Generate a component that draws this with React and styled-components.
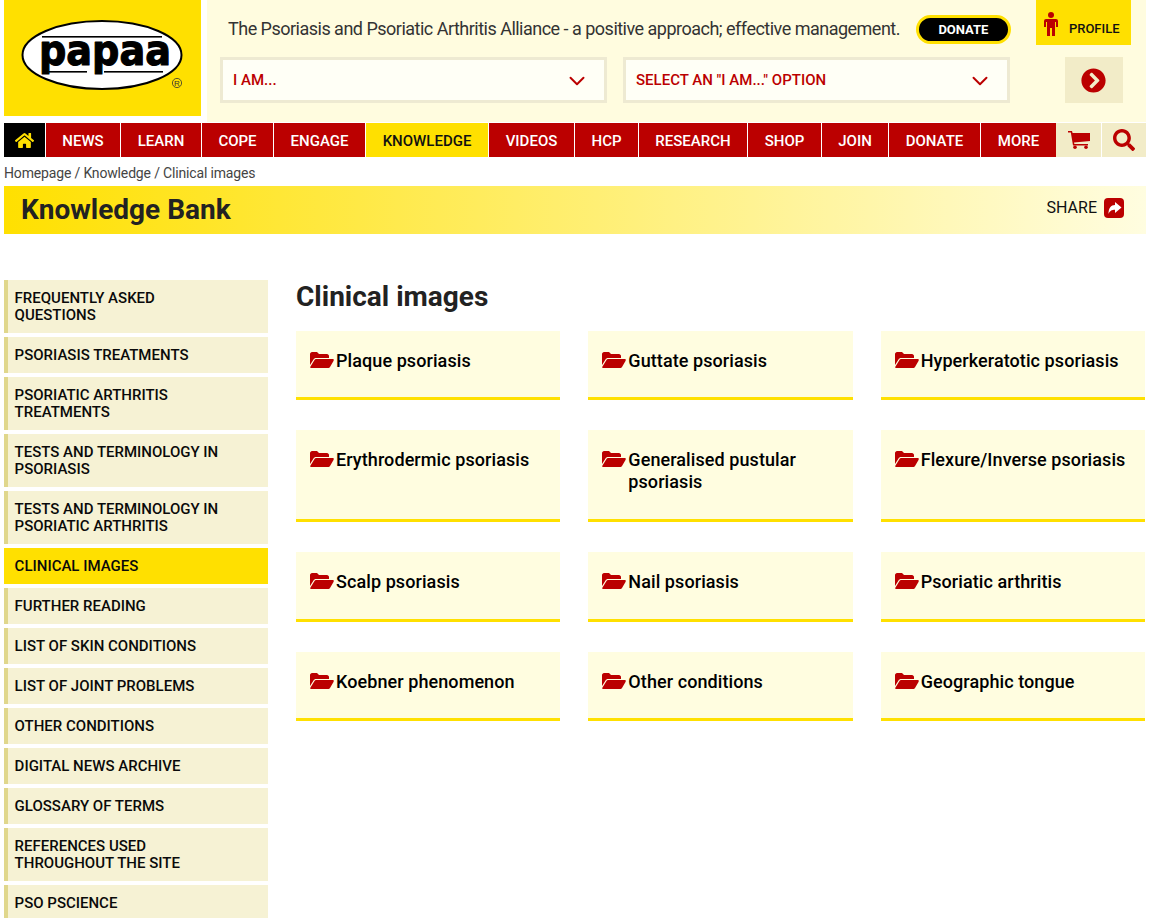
import React from "react";
import styled, { createGlobalStyle } from "styled-components";
import { FaHome, FaSearch, FaChevronCircleRight } from "react-icons/fa";
import { ChevronDown } from "lucide-react";

const RED = "#bb0000";
const YELLOW = "#ffe000";

const Global = createGlobalStyle`
  html, body { margin: 0; padding: 0; background: #fff; }
  body { font-family: Roboto, "Liberation Sans", sans-serif; color: #212529; }
  * { box-sizing: border-box; }
`;

const Page = styled.div`
  padding: 0 7px 0 4px;
  height: 918px;
  overflow: hidden;
`;

const Header = styled.header`
  display: flex;
  height: 123px;
`;

const LogoBox = styled.div`
  width: 197px;
  height: 116px;
  background: ${YELLOW};
  display: flex;
  align-items: center;
  justify-content: center;
`;

const HeaderMain = styled.div`
  flex: 1;
  margin-left: 6px;
  height: 122px;
  background: #fffcdf;
  padding-left: 13px;
  display: flex;
  flex-direction: column;
`;

const TopRow = styled.div`
  display: flex;
  height: 57px;
  align-items: flex-start;
`;

const Tagline = styled.div`
  margin: 17px 0 0 8px;
  font-size: 18px;
  line-height: 24px;
  letter-spacing: -0.51px;
  color: #333;
  white-space: nowrap;
`;

const DonatePill = styled.a`
  margin: 15px 0 0 16px;
  width: 95px;
  height: 29px;
  border-radius: 15px;
  border: 3px solid ${YELLOW};
  background: #000;
  color: #fff;
  font-size: 13px;
  font-weight: 700;
  display: flex;
  align-items: center;
  justify-content: center;
`;

const Profile = styled.a`
  margin-left: 25px;
  width: 95px;
  height: 45px;
  background: ${YELLOW};
  color: #111;
  font-size: 13px;
  font-weight: 500;
  display: flex;
  align-items: center;
  padding-left: 8px;
  gap: 11px;
  svg { margin-top: 3px; }
  span { margin-top: 11px; }
`;

const SelectRow = styled.div`
  display: flex;
  align-items: flex-start;
`;

const Select = styled.div`
  width: 387px;
  height: 46px;
  margin-right: 16px;
  border: 3px solid #eeeAd2;
  background: #fffff6;
  color: ${RED};
  font-size: 15px;
  font-weight: 500;
  display: flex;
  align-items: center;
  justify-content: space-between;
  padding: 0 14px 0 10px;
  svg { margin-top: 2px; }
`;

const GoButton = styled.div`
  width: 58px;
  height: 46px;
  margin-left: 39px;
  padding-right: 2px;
  background: #f2ecc8;
  color: ${RED};
  display: flex;
  align-items: center;
  justify-content: center;
`;

const Nav = styled.nav`
  display: flex;
  height: 34px;
  gap: 1px;
`;

const NavItem = styled.a`
  flex: none;
  background: ${(p) => (p.$active ? YELLOW : RED)};
  color: ${(p) => (p.$active ? "#111" : "#fff")};
  width: ${(p) => p.$w}px;
  padding-top: 1px;
  font-size: 15px;
  font-weight: 500;
  display: flex;
  align-items: center;
  justify-content: center;
`;

const NavIcon = styled.a`
  flex: none;
  width: ${(p) => p.$w}px;
  margin-left: ${(p) => (p.$flush ? "-1px" : "0")};
  background: ${(p) => p.$bg};
  color: ${(p) => p.$color};
  display: flex;
  align-items: center;
  justify-content: center;
`;

const Crumbs = styled.div`
  height: 29px;
  padding-top: 8px;
  font-size: 14px;
  line-height: 16px;
  color: #444;
  letter-spacing: -0.16px;
`;

const Banner = styled.div`
  height: 48px;
  background: linear-gradient(to right, ${YELLOW}, #fffde0);
  display: flex;
  align-items: center;
  justify-content: space-between;
  padding: 0 22px 0 17px;
`;

const BannerTitle = styled.h1`
  margin: -2px 0 0;
  font-size: 28px;
  font-weight: 700;
  color: #222;
`;

const Share = styled.div`
  display: flex;
  align-items: center;
  gap: 7px;
  font-size: 16px;
  color: #111;
  margin-top: -4px;
  span { margin-top: -2px; }
`;

const Body = styled.div`
  display: flex;
  margin-top: 46px;
  gap: 28px;
`;

const Side = styled.aside`
  width: 264px;
  flex: none;
  display: flex;
  flex-direction: column;
  gap: 4px;
`;

const SideItem = styled.a`
  display: block;
  border-left: 4px solid ${(p) => (p.$active ? YELLOW : "#e0d78c")};
  background: ${(p) => (p.$active ? YELLOW : "#f6f2d4")};
  color: #0a0a0a;
  font-size: 15px;
  font-weight: 500;
  line-height: 17px;
  padding: 10px 40px 9px 6.6px;
`;

const Main = styled.main`
  flex: 1;
  padding-right: 1px;
`;

const Heading = styled.h2`
  margin: 0 0 17.8px;
  font-size: 28px;
  line-height: 33px;
  font-weight: 700;
  color: #222;
`;

const Grid = styled.div`
  display: grid;
  grid-template-columns: repeat(3, 1fr);
  gap: 30px 28px;
`;

const Card = styled.a`
  display: flex;
  align-items: flex-start;
  gap: 2px;
  background: #fffde0;
  border-bottom: 3px solid ${YELLOW};
  padding: 19px 14px 25.6px;
  font-size: 18px;
  line-height: 22px;
  letter-spacing: 0.08px;
  font-weight: 500;
  color: #000;
  svg { flex: none; margin-top: 2px; }
`;

const nav = [
  ["NEWS", 74],
  ["LEARN", 80],
  ["COPE", 71],
  ["ENGAGE", 91],
  ["KNOWLEDGE", 122],
  ["VIDEOS", 85],
  ["HCP", 63],
  ["RESEARCH", 108],
  ["SHOP", 73],
  ["JOIN", 66],
  ["DONATE", 91],
  ["MORE", 75],
];

const side = [
  "FREQUENTLY ASKED QUESTIONS",
  "PSORIASIS TREATMENTS",
  "PSORIATIC ARTHRITIS TREATMENTS",
  "TESTS AND TERMINOLOGY IN PSORIASIS",
  "TESTS AND TERMINOLOGY IN PSORIATIC ARTHRITIS",
  "CLINICAL IMAGES",
  "FURTHER READING",
  "LIST OF SKIN CONDITIONS",
  "LIST OF JOINT PROBLEMS",
  "OTHER CONDITIONS",
  "DIGITAL NEWS ARCHIVE",
  "GLOSSARY OF TERMS",
  "REFERENCES USED THROUGHOUT THE SITE",
  "PSO PSCIENCE",
];

const cards = [
  "Plaque psoriasis",
  "Guttate psoriasis",
  "Hyperkeratotic psoriasis",
  "Erythrodermic psoriasis",
  "Generalised pustular psoriasis",
  "Flexure/Inverse psoriasis",
  "Scalp psoriasis",
  "Nail psoriasis",
  "Psoriatic arthritis",
  "Koebner phenomenon",
  "Other conditions",
  "Geographic tongue",
];

const Logo = () => (
  <svg width="197" height="116" viewBox="0 0 197 116">
    <ellipse cx="98" cy="55" rx="79.5" ry="34" fill="#fff" stroke="#000" strokeWidth="2" />
    <rect x="38" y="36" width="120" height="1.6" fill="#000" />
    <rect x="45" y="71" width="38" height="1.6" fill="#000" />
    <rect x="100" y="71" width="59" height="1.6" fill="#000" />
    <text
      x="101"
      y="64.5"
      textAnchor="middle"
      fontFamily="'DejaVu Sans', sans-serif"
      fontWeight="700"
      fontSize="42"
      textLength="132"
      lengthAdjust="spacingAndGlyphs"
      fill="#000"
      stroke="#000"
      strokeWidth="1.2"
      strokeLinejoin="round"
    >
      papaa
    </text>
    <circle cx="173" cy="83" r="4.6" fill="none" stroke="#333" strokeWidth="0.8" />
    <text x="173" y="86" textAnchor="middle" fontFamily="'Liberation Sans', sans-serif" fontSize="8" fill="#333">
      R
    </text>
  </svg>
);

const PersonIcon = () => (
  <svg width="14" height="24" viewBox="0 0 14 24" fill={RED}>
    <circle cx="7" cy="3" r="3" />
    <path d="M2 7h10a2 2 0 0 1 2 2v6h-2v-5h-1v14H8v-8H6v8H3V10H2v5H0V9a2 2 0 0 1 2-2z" />
  </svg>
);

const CartIcon = () => (
  <svg width="22" height="18" viewBox="0 0 22 18" fill={RED}>
    <path d="M0 0h4l.6 2H22v8L6 11.500l.4 1.500H20v1.500H5L2.800 1.600H0z" />
    <circle cx="7" cy="16.200" r="1.800" />
    <circle cx="18" cy="16.200" r="1.800" />
  </svg>
);

const ShareIcon = () => (
  <svg width="20" height="20" viewBox="0 0 20 20">
    <rect width="20" height="20" rx="4" fill={RED} />
    <path d="M11 4l6.500 5.500-6.500 5.500v-3.200c-3 0-5 .8-6.500 4.200C4.500 10 7 7 11 7z" fill="#fff" />
  </svg>
);

const FolderIcon = () => (
  <svg width="24" height="16" viewBox="0 0 24 16" fill={RED}>
    <path d="M0 13V2C0 1 1 0 2 0h5l2 2h8c1 0 2 1 2 2v2H6c-1 0-2 .5-2.500 1.500z" />
    <path d="M4.500 8c.5-.8 1-1 2-1H23c1 0 1 1 .5 2L20 15c-.5.7-1 1-2 1H1c-1 0-1-1-.5-1.500z" />
  </svg>
);

export default function App() {
  return (
    <Page>
      <Global />
      <Header>
        <LogoBox>
          <Logo />
        </LogoBox>
        <HeaderMain>
          <TopRow>
            <Tagline>The Psoriasis and Psoriatic Arthritis Alliance - a positive approach; effective management.</Tagline>
            <DonatePill>DONATE</DonatePill>
            <Profile>
              <PersonIcon />
              <span>PROFILE</span>
            </Profile>
          </TopRow>
          <SelectRow>
            <Select>
              I AM...
              <ChevronDown size={26} strokeWidth={1.8} />
            </Select>
            <Select>
              SELECT AN "I AM..." OPTION
              <ChevronDown size={26} strokeWidth={1.8} />
            </Select>
            <GoButton>
              <FaChevronCircleRight size={25} />
            </GoButton>
          </SelectRow>
        </HeaderMain>
      </Header>
      <Nav>
        <NavIcon $w={41} $bg="#000" $color={YELLOW}>
          <FaHome size={19} />
        </NavIcon>
        {nav.map(([label, w]) => (
          <NavItem key={label} $w={w} $active={label === "KNOWLEDGE"}>
            {label}
          </NavItem>
        ))}
        <NavIcon $w={45} $flush $bg="#f2ecc8" $color={RED}>
          <CartIcon />
        </NavIcon>
        <NavIcon $w={44} $bg="#f2ecc8" $color={RED}>
          <FaSearch size={22} />
        </NavIcon>
      </Nav>
      <Crumbs>Homepage / Knowledge / Clinical images</Crumbs>
      <Banner>
        <BannerTitle>Knowledge Bank</BannerTitle>
        <Share>
          <span>SHARE</span>
          <ShareIcon />
        </Share>
      </Banner>
      <Body>
        <Side>
          {side.map((s) => (
            <SideItem key={s} $active={s === "CLINICAL IMAGES"}>
              {s}
            </SideItem>
          ))}
        </Side>
        <Main>
          <Heading>Clinical images</Heading>
          <Grid>
            {cards.map((c) => (
              <Card key={c}>
                <FolderIcon />
                <span>{c}</span>
              </Card>
            ))}
          </Grid>
        </Main>
      </Body>
    </Page>
  );
}
